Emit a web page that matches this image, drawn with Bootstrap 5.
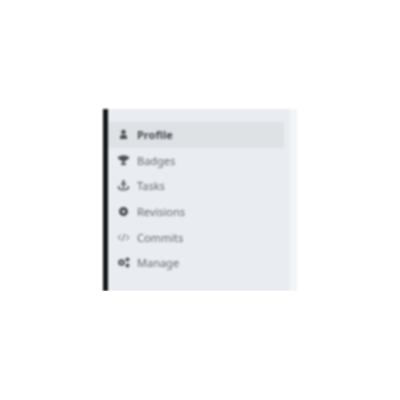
<!DOCTYPE html>
<html lang="en">
<head>
    <meta charset="UTF-8">
    <meta name="viewport" content="width=device-width, initial-scale=1">
    <title>Profile menu</title>
    <link rel="stylesheet" href="https://cdn.jsdelivr.net/npm/bootstrap@5.3.0/dist/css/bootstrap.min.css">
    <style>
        body { background: #fff; font-family: "Noto Sans", "Open Sans", sans-serif; }
        .side-wrap { width: 194px; height: 182px; margin: 109px 0 0 103px; background: #f3f4f7; filter: blur(.8px); }
        .side-panel { width: 187px; background: #e9ecf0; border-left: 5px solid #141418; padding: 13px 0 0 0; }
        .side-link { height: 25.6px; width: 176px; padding-left: 9px; gap: 7px; color: #666c75; font-size: 11px; line-height: 1; text-decoration: none; }
        .side-link.active-item { background: #dfe2e5; color: #454a52; font-weight: 700; }
        .side-ico { width: 13px; height: 11px; flex: none; fill: #4a4f56; }
        .side-ico.thin { fill: none; stroke: #666c75; stroke-width: 1; }
    </style>
</head>
<body class="m-0">
    <div class="side-wrap">
        <nav class="side-panel h-100 d-flex flex-column">
            <a href="#" class="side-link active-item d-flex align-items-center">
                <svg class="side-ico" viewBox="0 0 13 11"><circle cx="6.500" cy="3" r="2.300"/><path d="M3 10V8.300C3 6.700 4.200 5.800 5.200 5.800h2.600c1 0 2.200.9 2.200 2.500V10z"/></svg>
                Profile
            </a>
            <a href="#" class="side-link d-flex align-items-center">
                <svg class="side-ico" viewBox="0 0 13 11"><path d="M3.500 .5h6v1h2.500v1C12 4 10.700 4.900 9.300 5.100 8.800 5.900 8 6.300 7.300 6.400V8.300H9V10H4V8.300H5.700V6.400C5 6.300 4.200 5.900 3.700 5.100 2.300 4.900 1 4 1 2.500v-1h2.500z"/></svg>
                Badges
            </a>
            <a href="#" class="side-link d-flex align-items-center">
                <svg class="side-ico" viewBox="0 0 13 11"><circle cx="6.500" cy="1.600" r="1.300"/><path d="M5.800 2.500h1.400v1h2v1.200h-2v5h-1.400v-5h-2v-1.200h2z"/><path d="M.8 6.500h2.400l-.7.800c.5 1.200 1.800 2 3.300 2.200v1.200C3.500 10.500 2 9.600 1.400 8.300L.8 9zM12.200 6.500H9.800l.7.800c-.5 1.200-1.800 2-3.300 2.200v1.200c2.300-.2 3.800-1.100 4.400-2.400l.6.700z"/></svg>
                Tasks
            </a>
            <a href="#" class="side-link d-flex align-items-center">
                <svg class="side-ico" viewBox="0 0 13 11"><path fill-rule="evenodd" d="M6.500 1a4.500 4.500 0 1 0 0 9 4.500 4.500 0 0 0 0-9zm0 3a1.500 1.500 0 1 1 0 3 1.500 1.500 0 0 1 0-3z"/></svg>
                Revisions
            </a>
            <a href="#" class="side-link d-flex align-items-center">
                <svg class="side-ico thin" viewBox="0 0 13 11"><path d="M3.800 3 1 5.500 3.800 8M9.200 3 12 5.500 9.200 8M7.600 2 5.400 9"/></svg>
                Commits
            </a>
            <a href="#" class="side-link d-flex align-items-center">
                <svg class="side-ico" viewBox="0 0 13 11"><path fill-rule="evenodd" d="M4.500 2.200a3.300 3.300 0 1 0 0 6.600 3.300 3.300 0 0 0 0-6.600zm0 2a1.300 1.300 0 1 1 0 2.600 1.300 1.300 0 0 1 0-2.600z"/><circle cx="10.500" cy="2.500" r="1.900"/><circle cx="10.500" cy="8.500" r="1.900"/></svg>
                Manage
            </a>
        </nav>
    </div>
    <script src="https://cdn.jsdelivr.net/npm/bootstrap@5.3.0/dist/js/bootstrap.bundle.min.js"></script>
</body>
</html>
